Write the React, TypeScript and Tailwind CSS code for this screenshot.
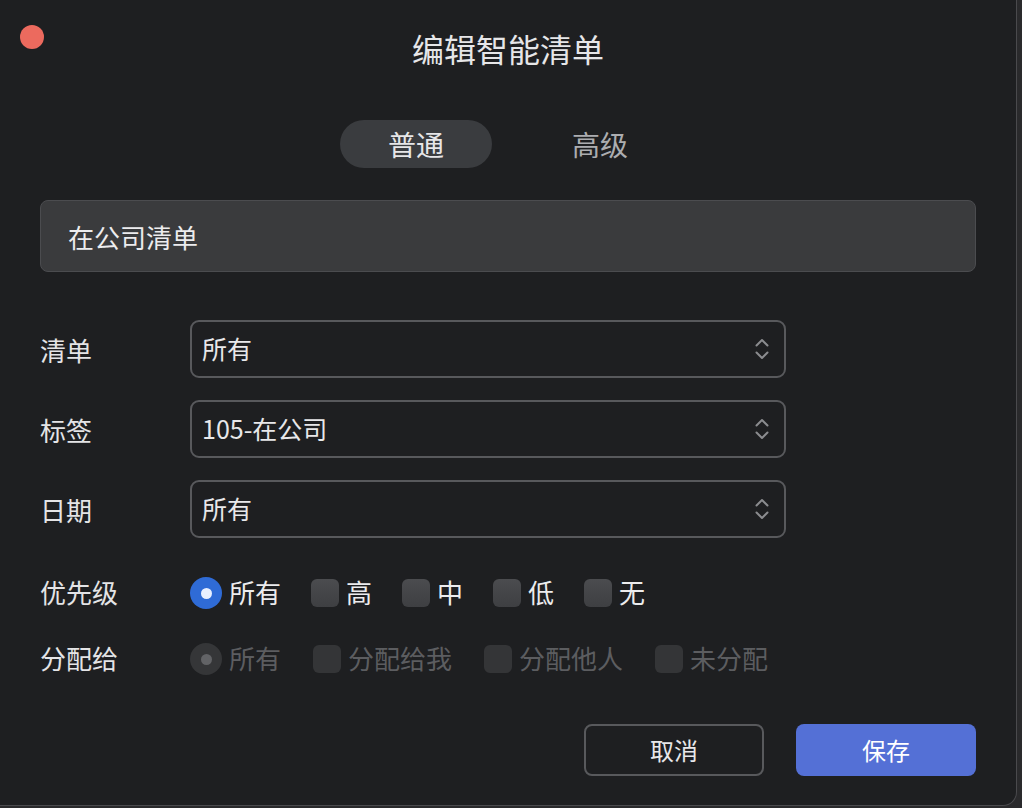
const font = { fontFamily: '"Noto Sans CJK SC", "Noto Sans", sans-serif' };

function Chevrons() {
  return (
    <svg width="16" height="28" viewBox="0 0 16 28" fill="none" stroke="#8b8c8f" strokeWidth="2" strokeLinecap="round" strokeLinejoin="round">
      <path d="M2.5 10.5 L8 5 L13.5 10.5" />
      <path d="M2.5 17.5 L8 23 L13.5 17.5" />
    </svg>
  );
}

function SelectRow({ label, value }: { label: string; value: string }) {
  return (
    <div className="flex items-center h-[58px]">
      <div className="w-[150px] text-[26px] text-[#e4e4e6]">{label}</div>
      <div className="flex items-center justify-between w-[596px] h-full border-2 border-[#58595c] rounded-[9px] pl-[10px] pr-[14px]">
        <span className="text-[25px] text-[#e8e8ea]">{value}</span>
        <Chevrons />
      </div>
    </div>
  );
}

function Radio({ disabled }: { disabled?: boolean }) {
  return (
    <span
      className={
        'flex items-center justify-center w-[32px] h-[32px] rounded-full ' +
        (disabled ? 'bg-[#353638]' : 'bg-[#2f6bd6]')
      }
    >
      <span className={'w-[11px] h-[11px] rounded-full ' + (disabled ? 'bg-[#626366]' : 'bg-[#e9f0ff]')} />
    </span>
  );
}

function Check({ disabled }: { disabled?: boolean }) {
  return (
    <span
      className={
        'w-[28px] h-[28px] rounded-[6px] ' +
        (disabled ? 'bg-[#343537]' : 'bg-gradient-to-b from-[#4b4c4f] to-[#3e3f42]')
      }
    />
  );
}

function Option({ label, radio, disabled }: { label: string; radio?: boolean; disabled?: boolean }) {
  return (
    <div className="flex items-center gap-[7px]">
      {radio ? <Radio disabled={disabled} /> : <Check disabled={disabled} />}
      <span className={'text-[26px] leading-none -mt-[3px] ' + (disabled ? 'text-[#5c5d60]' : 'text-[#ececee]')}>{label}</span>
    </div>
  );
}

export default function App() {
  return (
    <div className="w-[1022px] h-[808px] bg-[#2a2a2c]" style={font}>
      <div className="relative w-[1017px] h-[806px] bg-[#1e1f21] border-r border-b border-[#4a4a4d] rounded-br-[14px] px-[40px]">
        <span className="absolute left-[20px] top-[25px] w-[24px] h-[24px] rounded-full bg-[#ec6a5e]" />

        <div className="h-24 flex items-center justify-center text-[32px] text-[#e6e6e8]">编辑智能清单</div>

        <div className="mt-6 flex justify-center gap-8">
          <div className="w-[152px] h-12 rounded-full bg-[#3a3c3f] flex items-center justify-center text-[28px] text-[#e6e6e8]">普通</div>
          <div className="w-[152px] h-12 rounded-full flex items-center justify-center text-[28px] text-[#acadb0]">高级</div>
        </div>

        <div className="mt-8 h-[72px] rounded-[8px] bg-[#3a3b3d] border border-[#4b4c4f] flex items-center pl-[27px] text-[26px] text-[#ececee]">
          在公司清单
        </div>

        <div className="mt-12 flex flex-col gap-[22px]">
          <SelectRow label="清单" value="所有" />
          <SelectRow label="标签" value="105-在公司" />
          <SelectRow label="日期" value="所有" />
        </div>

        <div className="mt-[37px] flex items-center h-9">
          <div className="w-[150px] text-[26px] leading-none -mt-[3px] text-[#e4e4e6]">优先级</div>
          <div className="flex items-center gap-[30px]">
            <Option label="所有" radio />
            <Option label="高" />
            <Option label="中" />
            <Option label="低" />
            <Option label="无" />
          </div>
        </div>

        <div className="mt-[30px] flex items-center h-9">
          <div className="w-[150px] text-[26px] leading-none -mt-[3px] text-[#e4e4e6]">分配给</div>
          <div className="flex items-center gap-[32px]">
            <Option label="所有" radio disabled />
            <Option label="分配给我" disabled />
            <Option label="分配他人" disabled />
            <Option label="未分配" disabled />
          </div>
        </div>

        <div className="mt-[47px] flex justify-end gap-8">
          <button className="w-[180px] h-[52px] rounded-[8px] border-2 border-[#58595c] text-[24px] text-[#e8e8ea]">取消</button>
          <button className="w-[180px] h-[52px] rounded-[8px] bg-[#5470d6] text-[24px] text-white">保存</button>
        </div>
      </div>
    </div>
  );
}
